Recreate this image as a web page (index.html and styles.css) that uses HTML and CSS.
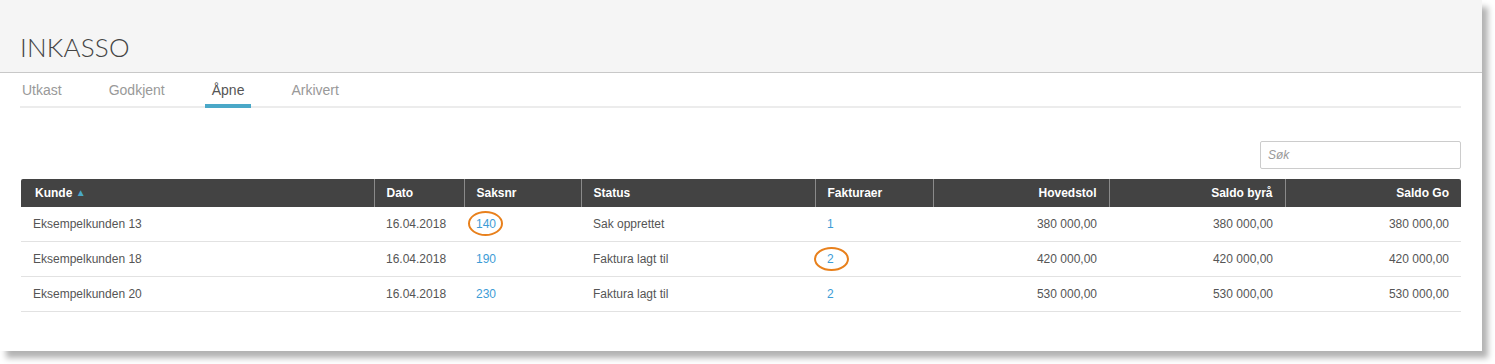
FILE: index.html
```html
<!DOCTYPE html>
<html lang="no">
<head>
    <meta charset="UTF-8">
    <meta name="viewport" content="width=device-width, initial-scale=1.0">
    <title>Inkasso</title>
    <link rel="stylesheet" href="styles.css">
</head>
<body>
    <div class="panel">
        <div class="panel-header">
            <h1 class="title">INKASSO</h1>
        </div>
        <div class="panel-body">
            <ul class="tabs">
                <li class="tab">Utkast</li>
                <li class="tab">Godkjent</li>
                <li class="tab active">Åpne</li>
                <li class="tab">Arkivert</li>
            </ul>

            <div class="toolbar">
                <input class="search" type="text" placeholder="Søk">
            </div>

            <table class="grid">
                <colgroup>
                    <col class="c-kunde">
                    <col class="c-dato">
                    <col class="c-saksnr">
                    <col class="c-status">
                    <col class="c-fakt">
                    <col class="c-sum">
                    <col class="c-sum">
                    <col class="c-sum">
                </colgroup>
                <thead>
                    <tr>
                        <th class="first">Kunde <span class="sort">&#9650;</span></th>
                        <th>Dato</th>
                        <th>Saksnr</th>
                        <th>Status</th>
                        <th>Fakturaer</th>
                        <th class="num">Hovedstol</th>
                        <th class="num">Saldo byrå</th>
                        <th class="num">Saldo Go</th>
                    </tr>
                </thead>
                <tbody>
                    <tr>
                        <td>Eksempelkunden 13</td>
                        <td>16.04.2018</td>
                        <td><a class="link marked mark-saksnr">140</a></td>
                        <td>Sak opprettet</td>
                        <td><a class="link">1</a></td>
                        <td class="num">380 000,00</td>
                        <td class="num">380 000,00</td>
                        <td class="num">380 000,00</td>
                    </tr>
                    <tr>
                        <td>Eksempelkunden 18</td>
                        <td>16.04.2018</td>
                        <td><a class="link">190</a></td>
                        <td>Faktura lagt til</td>
                        <td><a class="link marked mark-fakt">2</a></td>
                        <td class="num">420 000,00</td>
                        <td class="num">420 000,00</td>
                        <td class="num">420 000,00</td>
                    </tr>
                    <tr>
                        <td>Eksempelkunden 20</td>
                        <td>16.04.2018</td>
                        <td><a class="link">230</a></td>
                        <td>Faktura lagt til</td>
                        <td><a class="link">2</a></td>
                        <td class="num">530 000,00</td>
                        <td class="num">530 000,00</td>
                        <td class="num">530 000,00</td>
                    </tr>
                </tbody>
            </table>
        </div>
    </div>
</body>
</html>
```

FILE: styles.css
```css
body {
    margin: 0;
    padding-bottom: 13px;
    background-color: #fff;
    font-family: 'Liberation Sans', Arial, sans-serif;
    color: #555;
}

.panel {
    width: 1482px;
    height: 351px;
    background-color: #fff;
    box-shadow: 6px 7px 6px rgba(0, 0, 0, 0.3);
}

.panel-header {
    height: 72px;
    background-color: #f5f5f5;
    border-bottom: 1px solid #c8c8c8;
    display: flex;
    align-items: flex-end;
    padding: 0 20px;
}

.title {
    margin: 0 0 10px 0;
    font-family: 'Lato', sans-serif;
    font-weight: 300;
    font-size: 26px;
    line-height: 30px;
    color: #444;
    letter-spacing: 0.2px;
}

.panel-body {
    padding: 0 21px 0 20px;
}

.tabs {
    list-style: none;
    margin: 0;
    padding: 0;
    display: flex;
    gap: 33px;
    border-bottom: 2px solid #ececec;
}

.tab {
    padding: 9px 7px 6px;
    font-size: 14px;
    line-height: 16px;
    color: #999;
    border-bottom: 4px solid transparent;
    margin-bottom: -2px;
}

.tab:first-child {
    margin-left: -5px;
}

.tab.active {
    color: #555;
    border-bottom-color: #4aa8c8;
}

.toolbar {
    display: flex;
    justify-content: flex-end;
    padding: 33px 0 10px;
}

.search {
    width: 201px;
    height: 28px;
    box-sizing: border-box;
    border: 1px solid #ccc;
    border-radius: 2px;
    padding: 0 7px;
    font-family: 'Liberation Sans', Arial, sans-serif;
    font-size: 12px;
    color: #555;
}

.search::placeholder {
    color: #999;
    font-style: italic;
}

.grid {
    width: 1440px;
    margin-left: 1px;
    border-collapse: collapse;
    table-layout: fixed;
    font-size: 12px;
}

.c-kunde { width: 353px; }
.c-dato { width: 90px; }
.c-saksnr { width: 117px; }
.c-status { width: 234px; }
.c-fakt { width: 118px; }
.c-sum { width: 176px; }

.grid th {
    background-color: #434343;
    color: #fff;
    font-weight: bold;
    text-align: left;
    height: 28px;
    padding: 0 12px;
    border-left: 1px solid #8a8a8a;
}

.grid th.first {
    border-left: none;
    padding-left: 14px;
}

.grid th:first-child {
    border-top-left-radius: 2px;
}

.grid th:last-child {
    border-top-right-radius: 2px;
}

.sort {
    color: #4aa8c8;
    font-size: 10px;
    vertical-align: 1px;
}

.grid td {
    height: 34px;
    padding: 0 12px;
    border-bottom: 1px solid #e2e2e2;
    color: #555;
}

.grid .num {
    text-align: right;
}

.link {
    color: #3d9cd6;
    text-decoration: none;
}

/* annotation rings */
.marked {
    position: relative;
}

.marked::after {
    content: '';
    position: absolute;
    border: 2.5px solid #e8801c;
    border-radius: 50%;
}

.mark-saksnr::after {
    left: -8px;
    right: -7px;
    top: -6px;
    bottom: -5px;
}

.mark-fakt::after {
    left: -13px;
    right: -15px;
    top: -5px;
    bottom: -5px;
}
```
